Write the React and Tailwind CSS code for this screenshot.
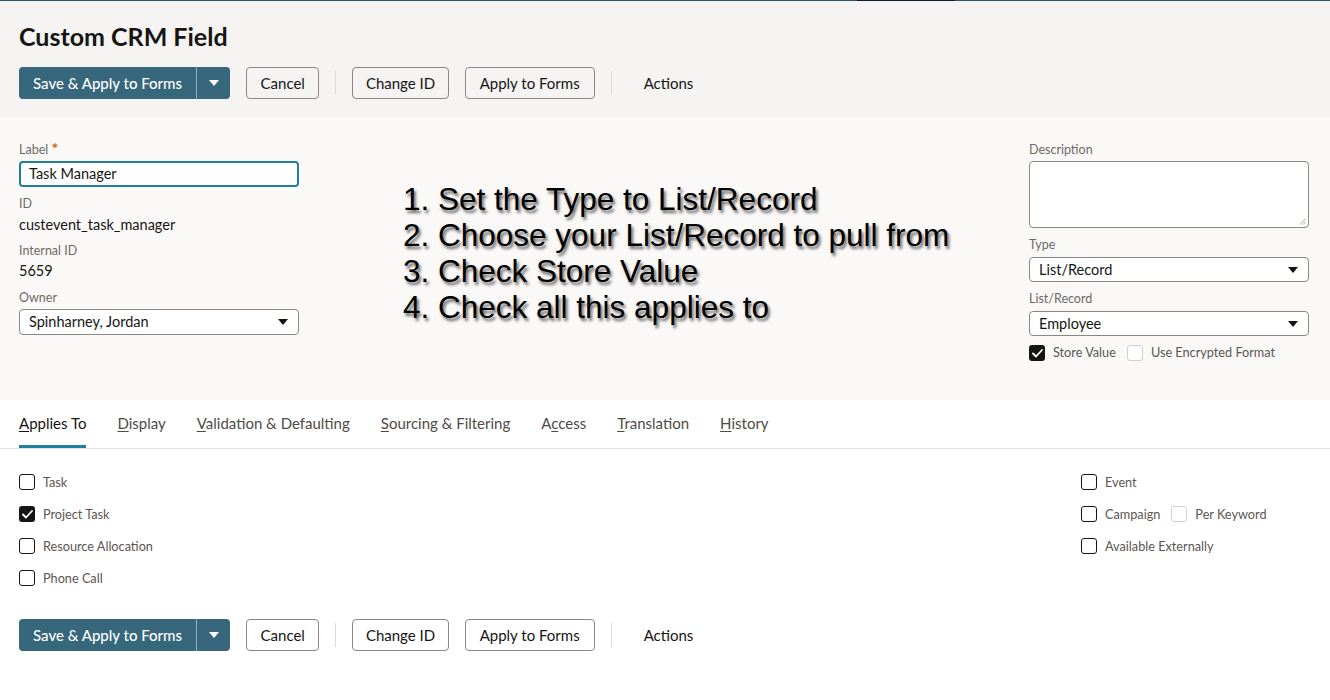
import React from "react";

const font = { fontFamily: "Lato, 'Noto Sans', sans-serif" };

function Caret({ color = "#161513" }) {
  return (
    <svg width="10" height="6" viewBox="0 0 10 6">
      <path d="M0 0 L10 0 L5 6 Z" fill={color} />
    </svg>
  );
}

function Check({ checked, light, className = "" }) {
  if (checked)
    return (
      <span className={"w-4 h-4 rounded-[3px] bg-[#161513] flex items-center justify-center shrink-0 " + className}>
        <svg width="11" height="9" viewBox="0 0 11 9">
          <path d="M1 4.5 L4 7.5 L10 1" stroke="#fff" strokeWidth="1.8" fill="none" strokeLinecap="round" strokeLinejoin="round" />
        </svg>
      </span>
    );
  return (
    <span
      className={
        "block w-4 h-4 rounded-[3px] border bg-white shrink-0 " +
        (light ? "border-[#d3d0cc] " : "border-[#161513] ") +
        className
      }
    />
  );
}

function Toolbar() {
  return (
    <div className="flex items-center h-8">
      <div className="flex h-8 rounded-[4px] bg-[#36677d] text-white">
        <button className="px-[14px] text-[15px] font-medium">Save &amp; Apply to Forms</button>
        <span className="w-px bg-[#8fb0bf]" />
        <button className="w-[33px] flex items-center justify-center">
          <Caret color="#fff" />
        </button>
      </div>
      <button className="ml-4 h-8 px-[13.5px] border border-[#8c8782] rounded-[4px] text-[15px] text-[#161513]">
        Cancel
      </button>
      <span className="mx-4 w-px h-6 bg-[#dcd9d6]" />
      <button className="h-8 px-[12.5px] border border-[#8c8782] rounded-[4px] text-[15px] text-[#161513]">
        Change ID
      </button>
      <button className="ml-4 h-8 px-[14px] border border-[#8c8782] rounded-[4px] text-[15px] text-[#161513]">
        Apply to Forms
      </button>
      <span className="mx-4 w-px h-6 bg-[#dcd9d6]" />
      <button className="h-8 px-4 text-[15px] text-[#161513]">Actions</button>
    </div>
  );
}

function FieldLabel({ children, className = "" }) {
  return <div className={"text-[12.5px] leading-4 text-[#6f6964] " + className}>{children}</div>;
}

function Select({ value, className = "" }) {
  return (
    <div
      className={
        "flex items-center justify-between border border-[#8c8782] rounded-[4px] bg-white pl-[9px] pr-[10px] text-[14.5px] text-[#161513] " +
        className
      }
    >
      <span>{value}</span>
      <Caret />
    </div>
  );
}

export default function App() {
  const tabs = [
    ["A", "pplies To", true],
    ["D", "isplay"],
    ["V", "alidation & Defaulting"],
    ["S", "ourcing & Filtering"],
    ["Ac", "cess", false, true],
    ["T", "ranslation"],
    ["H", "istory"],
  ];
  const leftChecks = [
    ["Task", false],
    ["Project Task", true],
    ["Resource Allocation", false],
    ["Phone Call", false],
  ];
  return (
    <div className="w-[1330px] min-h-[700px] bg-white" style={font}>
      {/* Header */}
      <div className="bg-[#f5f4f2] px-[19px] pt-[20px] pb-[18px] relative">
        <div className="absolute left-0 right-0 top-0 h-px bg-[#2c5668]" />
        <div className="absolute left-[857px] w-[98px] top-0 h-px bg-[#0f1b2a]" />
        <h1 className="text-[25px] leading-8 font-bold text-[#161513]">Custom CRM Field</h1>
        <div className="mt-[15px]">
          <Toolbar />
        </div>
      </div>

      {/* Form */}
      <div className="bg-[#faf9f7] h-[283px] pl-[19px] pr-[21px] pt-[24px] flex">
        <div className="w-[280px]">
          <FieldLabel className="pt-px">
            Label <span className="text-[#c0651f] text-[16px] leading-3 font-bold">*</span>
          </FieldLabel>
          <div className="mt-[3px] h-[26px] border-2 border-[#227e9e] rounded-[4px] bg-white flex items-center pl-[8px] text-[14.5px] text-[#161513]">
            Task Manager
          </div>
          <FieldLabel className="mt-[9px]">ID</FieldLabel>
          <div className="mt-[3px] text-[14.5px] leading-5 text-[#161513]">custevent_task_manager</div>
          <FieldLabel className="mt-[8px]">Internal ID</FieldLabel>
          <div className="mt-[2px] text-[14.5px] leading-5 text-[#161513]">5659</div>
          <FieldLabel className="mt-[9px]">Owner</FieldLabel>
          <Select value="Spinharney, Jordan" className="mt-[3px] h-[26px]" />
        </div>

        <div
          className="ml-[104px] pt-[40px] text-[31.5px] leading-[36px] text-black [text-shadow:2px_3px_3px_rgba(0,0,0,0.6)]"
          style={{ fontFamily: "'Liberation Sans', Arial, sans-serif" }}
        >
          <div>1. Set the Type to List/Record</div>
          <div>2. Choose your List/Record to pull from</div>
          <div>3. Check Store Value</div>
          <div>4. Check all this applies to</div>
        </div>

        <div className="ml-auto w-[280px]">
          <FieldLabel className="pt-px">Description</FieldLabel>
          <div className="mt-[3px] h-[67px] border border-[#8c8782] rounded-[4px] bg-white relative">
            <svg className="absolute right-[2px] bottom-[2px]" width="7" height="7" viewBox="0 0 7 7">
              <path d="M6.5 1 L1 6.5 M6.5 4 L4 6.5" stroke="#8c8782" strokeWidth="0.8" />
            </svg>
          </div>
          <FieldLabel className="mt-[9px]">Type</FieldLabel>
          <Select value="List/Record" className="mt-[4px] h-[25px]" />
          <FieldLabel className="mt-[9px]">List/Record</FieldLabel>
          <Select value="Employee" className="mt-[4px] h-[25px]" />
          <div className="mt-[9px] flex items-center h-4 text-[12.7px] text-[#5b5652]">
            <Check checked />
            <span className="ml-2">Store Value</span>
            <Check light className="ml-[11px]" />
            <span className="ml-2">Use Encrypted Format</span>
          </div>
        </div>
      </div>

      {/* Tabs */}
      <div className="h-[49px] border-b border-[#e4e1dd] px-[19px] flex items-stretch gap-[31px]">
        {tabs.map(([u, rest, active, two], i) => (
          <div
            key={i}
            className={
              "flex items-center pb-[2px] text-[15px] relative " +
              (active ? "text-[#161513]" : "text-[#4f4a46]")
            }
          >
            {two ? (
              <span>
                A<span className="underline underline-offset-2">c</span>cess
              </span>
            ) : (
              <span>
                <span className="underline underline-offset-2">{u}</span>
                {rest}
              </span>
            )}
            {active && <span className="absolute left-0 right-0 bottom-0 h-[3px] bg-[#227e9e]" />}
          </div>
        ))}
      </div>

      {/* Applies to checkboxes */}
      <div className="pl-[19px] pr-[21px] pt-[25px] flex">
        <div className="flex flex-col gap-4">
          {leftChecks.map(([l, c]) => (
            <div key={l} className="flex items-center h-4 text-[12.7px] text-[#5b5652]">
              <Check checked={c} />
              <span className="ml-2 pt-[2px]">{l}</span>
            </div>
          ))}
        </div>
        <div className="ml-auto w-[228px] flex flex-col gap-4">
          <div className="flex items-center h-4 text-[12.7px] text-[#5b5652]">
            <Check />
            <span className="ml-2 pt-[2px]">Event</span>
          </div>
          <div className="flex items-center h-4 text-[12.7px] text-[#5b5652]">
            <Check />
            <span className="ml-2 pt-[2px]">Campaign</span>
            <Check light className="ml-[11px]" />
            <span className="ml-2 pt-[2px]">Per Keyword</span>
          </div>
          <div className="flex items-center h-4 text-[12.7px] text-[#5b5652]">
            <Check />
            <span className="ml-2 pt-[2px]">Available Externally</span>
          </div>
        </div>
      </div>

      <div className="px-[19px] pt-[33px]">
        <Toolbar />
      </div>
    </div>
  );
}
